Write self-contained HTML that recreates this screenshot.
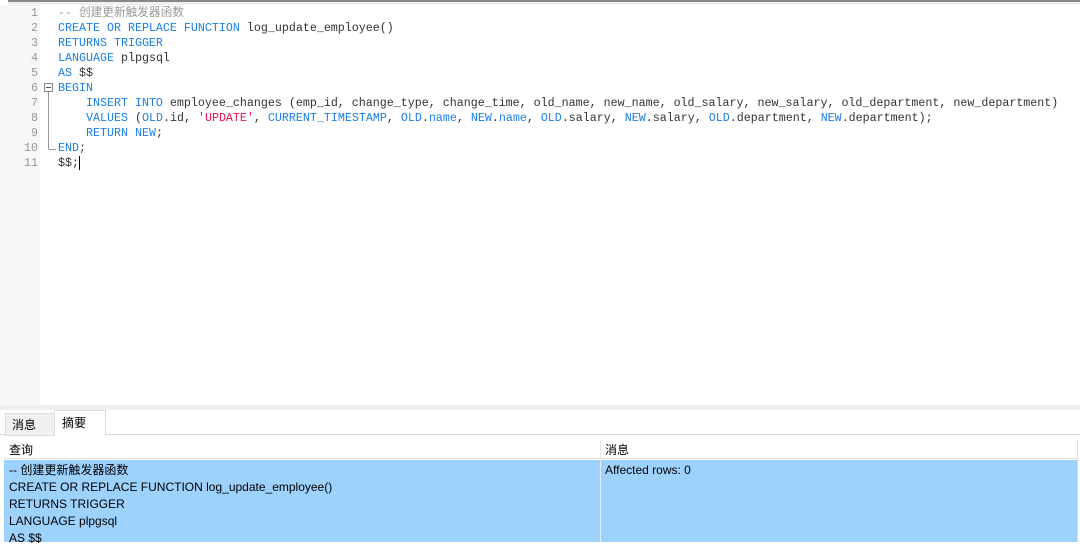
<!DOCTYPE html>
<html><head><meta charset="utf-8"><style>
body{margin:0;width:1080px;height:542px;overflow:hidden;background:#fff;position:relative;font-family:"Liberation Sans","Noto Sans CJK SC",sans-serif;}
.top{position:absolute;left:8px;top:0;width:1072px;height:2px;background:#888}
.top2{position:absolute;left:8px;top:2px;width:1072px;height:3px;background:#f0f0f0}
.gut{position:absolute;left:0;top:5px;width:40px;height:400px;background:#f7f7f7}
.code{position:absolute;left:0;top:6px;font-family:"Liberation Mono","Noto Sans CJK SC",monospace;font-size:11.67px;line-height:15px;color:#333;white-space:pre}
.ln{position:absolute;left:0;width:38px;text-align:right;color:#999}
.tx{position:absolute;left:58px}
.k{color:#1a7fe6}.c{color:#999}.s{color:#e8104a}
.band{position:absolute;left:0;top:405px;width:1080px;height:5px;background:#f0f0f0}
.tabs{position:absolute;left:0;top:410px;width:1080px;height:24px;border-bottom:1px solid #d8d8d8}
.tab1{position:absolute;left:5px;top:3px;width:42px;height:21px;background:#f0f0f0;border:1px solid #ddd;font-size:12px;line-height:22px;padding-left:6px}
.tab2{position:absolute;left:54px;top:0;width:43px;height:25px;background:#fff;border:1px solid #ddd;border-bottom:none;font-size:12px;line-height:24px;padding-left:7px}
.hdr{position:absolute;top:440px;height:19px;font-size:12px;line-height:21px;border-bottom:1px solid #ddd}
.grid{position:absolute;top:460px;left:4px;width:1073px;height:82px;background:#9dd1fe}
.vl{position:absolute;left:600px;top:440px;width:1px;height:102px;background:#e8e8e8}
.rows{position:absolute;left:9px;top:462px;font-size:12px;line-height:17px;color:#000}
</style></head><body>
<div class="top"></div><div class="top2"></div>
<div class="gut"></div>
<div class="code">
<div class="ln" style="top:0">1</div><div class="ln" style="top:15px">2</div><div class="ln" style="top:30px">3</div><div class="ln" style="top:45px">4</div><div class="ln" style="top:60px">5</div><div class="ln" style="top:75px">6</div><div class="ln" style="top:90px">7</div><div class="ln" style="top:105px">8</div><div class="ln" style="top:120px">9</div><div class="ln" style="top:135px">10</div><div class="ln" style="top:150px">11</div>
<div class="tx" style="top:0"><span class="c">-- 创建更新触发器函数</span>
<span class="k">CREATE OR REPLACE FUNCTION</span> log_update_employee()
<span class="k">RETURNS TRIGGER</span>
<span class="k">LANGUAGE</span> plpgsql
<span class="k">AS</span> $$
<span class="k">BEGIN</span>
    <span class="k">INSERT INTO</span> employee_changes (emp_id, change_type, change_time, old_name, new_name, old_salary, new_salary, old_department, new_department)
    <span class="k">VALUES</span> (<span class="k">OLD</span>.id, <span class="s">'UPDATE'</span>, <span class="k">CURRENT_TIMESTAMP</span>, <span class="k">OLD</span>.<span class="k">name</span>, <span class="k">NEW</span>.<span class="k">name</span>, <span class="k">OLD</span>.salary, <span class="k">NEW</span>.salary, <span class="k">OLD</span>.department, <span class="k">NEW</span>.department);
    <span class="k">RETURN NEW</span>;
<span class="k">END</span>;
$$;<span style="border-left:1px solid #000"></span></div>
</div>
<svg style="position:absolute;left:44px;top:83px" width="14" height="70"><rect x="0.5" y="0.5" width="8" height="8" fill="#fff" stroke="#888"/><line x1="2" y1="4.5" x2="7" y2="4.5" stroke="#555"/><line x1="4.5" y1="9" x2="4.5" y2="66" stroke="#999"/><line x1="4.5" y1="66.5" x2="12" y2="66.5" stroke="#999"/></svg>
<div class="band"></div>
<div class="tabs"><div class="tab1">消息</div><div class="tab2">摘要</div></div>
<div class="hdr" style="left:4px;width:596px;padding-left:5px;box-sizing:border-box">查询</div>
<div class="hdr" style="left:601px;width:476px;padding-left:4px;box-sizing:border-box">消息</div>
<div class="grid"></div>
<div class="vl"></div>
<div style="position:absolute;left:1077px;top:440px;width:1px;height:102px;background:#ddd"></div>
<div class="rows">-- 创建更新触发器函数<br>CREATE OR REPLACE FUNCTION log_update_employee()<br>RETURNS TRIGGER<br>LANGUAGE plpgsql<br>AS $$</div>
<div class="rows" style="left:605px">Affected rows: 0</div>
</body></html>
